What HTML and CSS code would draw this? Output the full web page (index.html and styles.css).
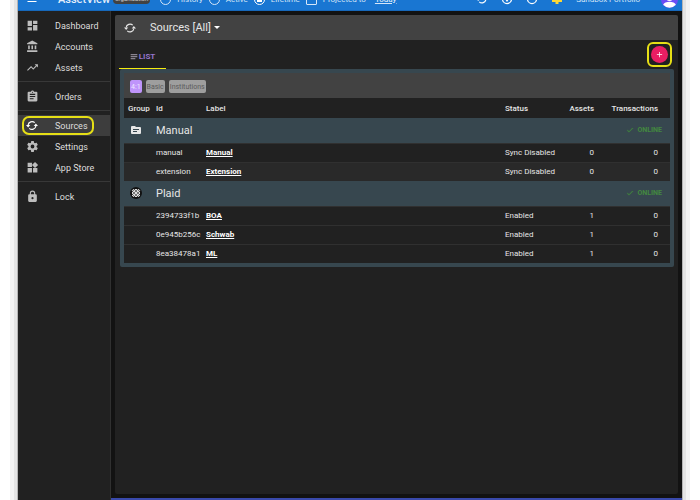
FILE: index.html
```html
<!DOCTYPE html>
<html lang="en">
<head>
<meta charset="utf-8">
<title>AssetView</title>
<link rel="stylesheet" href="styles.css">
</head>
<body>
<svg class="defs" aria-hidden="true">
  <symbol id="sync" viewBox="0 0 24 24"><path d="M4.200 11A8 8 0 0 1 17.500 6.300M19.800 13A8 8 0 0 1 6.500 17.700" fill="none" stroke="currentColor" stroke-width="2.400"/><path d="M0 11h8.500l-4.200 5zM24 13h-8.500l4.200-5z"/></symbol>
  <symbol id="check" viewBox="0 0 24 24"><path d="M9 16.200 4.800 12l-1.400 1.400L9 19 21 7l-1.400-1.400z" stroke="currentColor"/></symbol>
</svg>
<div class="app">
  <header class="topbar">
    <div class="toolbar">
      <button class="menu" aria-label="Menu"><svg viewBox="0 0 24 24"><path d="M3 18h18v-2H3zm0-5h18v-2H3zm0-7v2h18V6z"/></svg></button>
      <span class="brand">AssetView</span>
      <span class="org">organization</span>
      <label class="choice"><input type="radio" name="mode">History</label>
      <label class="choice"><input type="radio" name="mode">Active</label>
      <label class="choice"><input type="radio" name="mode" checked>Lifetime</label>
      <label class="choice projected"><input type="checkbox">Projected to</label>
      <a class="today" href="#">Today</a>
      <div class="tools">
        <button aria-label="Refresh"><svg><use href="#sync"/></svg></button>
        <button aria-label="Help"><svg viewBox="0 0 24 24"><circle cx="12" cy="12" r="9" fill="none" stroke="currentColor" stroke-width="2.500"/><path d="M8 12h8l-4 6z"/></svg></button>
        <button aria-label="Theme"><svg viewBox="0 0 24 24"><circle cx="12" cy="12" r="9" fill="none" stroke="currentColor" stroke-width="2.500"/></svg></button>
        <button class="alert" aria-label="Notifications"><svg viewBox="0 0 24 24"><path d="M2 4h20v14h-7v4H9v-4H2z"/></svg></button>
        <span class="portfolio">Sandbox Portfolio</span>
        <svg class="avatar" viewBox="0 0 24 24"><circle cx="12" cy="12" r="12" fill="#6b4df5"/><circle cx="12" cy="9" r="5" fill="#fff"/><path d="M3 19.500c2-6 16-6 18 0a12 12 0 0 1-18 0z" fill="#fff"/></svg>
      </div>
    </div>
  </header>
  <div class="body">
    <nav class="sidebar">
      <div class="group">
        <a href="#"><svg viewBox="0 0 24 24"><path d="M3 13h8V3H3zm0 8h8v-6H3zm10 0h8V11h-8zm0-18v6h8V3z"/></svg>Dashboard</a>
        <a href="#"><svg viewBox="0 0 24 24"><path d="M4 10v7h3v-7zm6 0v7h3v-7zM2 22h19v-3H2zm14-12v7h3v-7zm-4.500-9L2 6v2h19V6z"/></svg>Accounts</a>
        <a href="#"><svg viewBox="0 0 24 24"><path d="m16 6 2.290 2.290-4.880 4.880-4-4L2 16.590 3.410 18l6-6 4 4 6.300-6.290L22 12V6z"/></svg>Assets</a>
      </div>
      <div class="group">
        <a href="#"><svg viewBox="0 0 24 24"><path fill-rule="evenodd" d="M19 3h-4.180C14.400 1.840 13.300 1 12 1s-2.400.84-2.820 2H5a2 2 0 0 0-2 2v14a2 2 0 0 0 2 2h14a2 2 0 0 0 2-2V5a2 2 0 0 0-2-2zm-7 0a1 1 0 1 1 0 2 1 1 0 0 1 0-2zm2 14H7v-2h7zm3-4H7v-2h10zm0-4H7V7h10z"/></svg>Orders</a>
      </div>
      <div class="group">
        <a href="#" class="active" aria-current="page"><svg><use href="#sync"/></svg>Sources</a>
        <a href="#"><svg viewBox="0 0 24 24"><path fill-rule="evenodd" d="M19.430 12.980c.04-.32.07-.64.07-.98s-.03-.66-.07-.98l2.110-1.650a.5.5 0 0 0 .12-.64l-2-3.460a.5.5 0 0 0-.61-.22l-2.490 1c-.52-.4-1.080-.73-1.690-.98l-.38-2.650A.5.5 0 0 0 14 2h-4a.5.5 0 0 0-.49.42l-.38 2.650c-.61.25-1.170.59-1.690.98l-2.490-1a.5.5 0 0 0-.61.22l-2 3.460a.5.5 0 0 0 .12.64l2.110 1.650c-.04.32-.07.65-.07.98s.03.66.07.98l-2.110 1.650a.5.5 0 0 0-.12.64l2 3.460c.12.22.39.3.61.22l2.490-1c.52.4 1.080.73 1.690.98l.38 2.650c.03.24.24.42.49.42h4c.25 0 .46-.18.49-.42l.38-2.650c.61-.25 1.170-.59 1.690-.98l2.490 1c.23.09.49 0 .61-.22l2-3.460a.5.5 0 0 0-.12-.64zM12 15.500a3.500 3.500 0 1 1 0-7 3.500 3.500 0 0 1 0 7z"/></svg>Settings</a>
        <a href="#"><svg viewBox="0 0 24 24"><path d="M13 13v8h8v-8zM3 21h8v-8H3zM3 3v8h8V3zm13.660-1.310L11 7.340 16.660 13l5.660-5.660z"/></svg>App Store</a>
      </div>
      <div class="group">
        <a href="#"><svg viewBox="0 0 24 24"><path fill-rule="evenodd" d="M18 8h-1V6A5 5 0 0 0 7 6v2H6a2 2 0 0 0-2 2v10a2 2 0 0 0 2 2h12a2 2 0 0 0 2-2V10a2 2 0 0 0-2-2zm-6 9a2 2 0 1 1 0-4 2 2 0 0 1 0 4zm3-9H9V6a3 3 0 0 1 6 0z"/></svg>Lock</a>
      </div>
    </nav>
    <main>
      <section class="card">
        <div class="title">
          <svg><use href="#sync"/></svg>
          <button>Sources [All]<span class="caret"></span></button>
        </div>
        <div class="tabs">
          <button class="tab"><svg viewBox="0 0 24 24"><path d="M2 3h20v4H2zm0 6h20v4H2zm0 6h14v4H2z"/></svg>LIST</button>
          <div class="add-ring"><button class="add" aria-label="Add source"><svg viewBox="0 0 24 24"><path d="M19 13h-6v6h-2v-6H5v-2h6V5h2v6h6z"/></svg></button></div>
        </div>
        <div class="panel">
          <div class="filters">
            <button class="chip on">4:1</button>
            <button class="chip">Basic</button>
            <button class="chip">Institutions</button>
          </div>
          <table>
            <colgroup><col class="c-group"><col class="c-id"><col><col class="c-status"><col class="c-assets"><col class="c-trans"></colgroup>
            <thead>
              <tr><th>Group</th><th>Id</th><th>Label</th><th>Status</th><th class="num">Assets</th><th class="num">Transactions</th></tr>
            </thead>
            <tbody>
              <tr class="heading"><td class="mark"><svg viewBox="0 0 24 24"><path fill-rule="evenodd" d="M20 6h-8l-2-2H4a2 2 0 0 0-2 2v12a2 2 0 0 0 2 2h16a2 2 0 0 0 2-2V8a2 2 0 0 0-2-2zm-6 10H6v-2h8zm4-4H6v-2h12z"/></svg></td><td colspan="3">Manual</td><td colspan="2" class="online"><svg><use href="#check"/></svg>ONLINE</td></tr>
              <tr><td></td><td>manual</td><td><a href="#">Manual</a></td><td>Sync Disabled</td><td class="num">0</td><td class="num">0</td></tr>
              <tr class="alt"><td></td><td>extension</td><td><a href="#">Extension</a></td><td>Sync Disabled</td><td class="num">0</td><td class="num">0</td></tr>
              <tr class="heading"><td class="mark"><svg viewBox="0 0 24 24"><circle cx="12" cy="12" r="12" fill="#111"/><path d="M7 4h10l3 3v10l-3 3H7l-3-3V7z" fill="#ddd"/><path d="M4 8l12 12M4 14l6 6M8 4l12 12M14 4l6 6M20 8 8 20M20 14l-6 6M16 4 4 16M10 4l-6 6" stroke="#111" stroke-width="1"/></svg></td><td colspan="3">Plaid</td><td colspan="2" class="online"><svg><use href="#check"/></svg>ONLINE</td></tr>
              <tr><td></td><td>2394733f1b</td><td><a href="#">BOA</a></td><td>Enabled</td><td class="num">1</td><td class="num">0</td></tr>
              <tr><td></td><td>0e945b256c</td><td><a href="#">Schwab</a></td><td>Enabled</td><td class="num">1</td><td class="num">0</td></tr>
              <tr><td></td><td>8ea38478a1</td><td><a href="#">ML</a></td><td>Enabled</td><td class="num">1</td><td class="num">0</td></tr>
            </tbody>
          </table>
        </div>
      </section>
    </main>
  </div>
</div>
</body>
</html>
```
FILE: styles.css
```css
* { box-sizing: border-box; }
body { margin: 0; background: #fff; font-family: Roboto, "Liberation Sans", sans-serif; font-size: 8px; color: #e6e6e6; }
button { border: 0; padding: 0; background: none; color: inherit; font: inherit; }
a { color: inherit; text-decoration: none; }
svg { width: 12px; height: 12px; fill: currentColor; flex: none; }
.defs { position: absolute; width: 0; height: 0; }

.app { display: flex; flex-direction: column; min-height: 100vh; margin: 0 18px; background: #212121; box-shadow: 0 0 0 1px #b5b5b5, 0 0 0 4px #e4e4e4, 0 0 0 8px #f3f3f3; }

.topbar { display: flex; flex-direction: column; justify-content: flex-end; height: 11px; overflow: hidden; background: #1976d2; border-bottom: 1px solid #1668bb; }
.toolbar { display: flex; flex: none; align-items: center; height: 22px; padding: 0 4px 0 8px; white-space: nowrap; font-size: 8px; color: #d6e6f8; }
.toolbar button { display: flex; color: #fff; }
.brand { margin-left: 20px; font-size: 11px; font-weight: 500; color: #e3effb; }
.org { margin: 0 10px 0 3px; padding: 0 2px; border-radius: 4px; background: #424242; color: #ccc; font-size: 6px; line-height: 10px; }
.choice { display: flex; align-items: center; gap: 6px; margin-right: 6px; }
.choice input { appearance: none; width: 11px; height: 11px; margin: 0; border: 1px solid #d6e6f8; border-radius: 50%; }
.choice input:checked { border: 1px solid #fff; background: radial-gradient(#fff 3px, transparent 3px); }
.projected input { border-radius: 1px; }
.today { margin-left: 3px; font-weight: 500; text-decoration: underline; }
.tools { display: flex; align-items: center; gap: 13px; margin-left: auto; }
.tools .alert { color: #fdd835; }
.portfolio { margin-right: 8px; }
.avatar { width: 17px; height: 17px; }

.body { display: flex; flex: 1; }
.sidebar { width: 93px; flex: none; border-right: 1px solid #303030; }
.group { padding: 4px 0 3px; border-bottom: 1px solid #383838; }
.group:last-child { border-bottom: 0; }
.group a { position: relative; display: flex; align-items: center; gap: 16px; height: 21px; padding-left: 8px; font-size: 9px; color: #dedede; }
.group svg { width: 13px; height: 13px; color: #bdbdbd; }
.group .active { background: #3d3d3d; }
.group .active svg { width: 12px; margin-right: 1px; color: #fff; }
.group .active::after { content: ""; position: absolute; inset: 1px 16px 1px 4px; border: 2px solid #e6df16; border-radius: 7px; }

main { display: flex; flex: 1; min-width: 0; padding: 4px; background: #121212; border-bottom: 2px solid #3949ab; }
.card { flex: 1; min-width: 0; background: #212121; border-radius: 2px; overflow: hidden; }
.title { display: flex; align-items: center; gap: 14px; height: 25px; padding-left: 9px; background: #424242; font-size: 11px; }
.title button { display: flex; align-items: center; gap: 3px; }
.caret { border: 3px solid transparent; border-top-color: #fff; border-bottom: 0; }
.tabs { display: flex; justify-content: space-between; height: 29px; padding: 0 4px; }
.tab { display: flex; align-items: center; justify-content: center; gap: 1px; width: 47px; padding-top: 5px; border-bottom: 1px solid #f5ec10; color: #9575cd; font-weight: 700; }
.tab svg { width: 8px; height: 8px; color: #8a8590; }
.add-ring { align-self: center; margin-right: 2px; padding: 2px; border: 2px solid #e6df16; border-radius: 6px; }
.add { display: flex; align-items: center; justify-content: center; width: 17px; height: 17px; border-radius: 50%; background: #e91e63; color: #fff; }
.add svg { width: 9px; height: 9px; }

.panel { margin: 0 4px 0 5px; padding: 4px; background: #37474f; border-radius: 2px; }
.filters { display: flex; align-items: center; gap: 4px; height: 25px; padding: 6px 6px 4px; background: #424242; }
.chip { height: 13px; padding: 0 1px; border-radius: 2px; background: #9e9e9e; color: #5c5c5c; font-size: 7px; }
.chip.on { background: #bf94fb; color: #f0e6ff; }

table { width: 100%; table-layout: fixed; border-collapse: collapse; }
.c-group { width: 28px; }
.c-id { width: 50px; }
.c-status { width: 59px; }
.c-assets { width: 38px; }
.c-trans { width: 72px; }
th, td { padding: 0 4px; text-align: left; white-space: nowrap; }
th { height: 20px; font-weight: 500; background: #212121; }
td { height: 19px; background: #212121; border-top: 1px solid #303030; font-size: 8px; }
.alt td { background: #292929; }
.num { text-align: right; }
.num:last-child { padding-right: 12px; }
td a { font-weight: 700; color: #fff; text-decoration: underline; }
.heading td { height: 25px; border-top: 0; background: #37474f; font-size: 11px; }
.heading .mark { padding-left: 6px; }
.mark svg { display: block; }
.heading .online { padding-right: 8px; text-align: right; color: #43883f; font-size: 7px; font-weight: 700; }
.online svg { width: 8px; height: 8px; margin-right: 4px; vertical-align: middle; }
```
